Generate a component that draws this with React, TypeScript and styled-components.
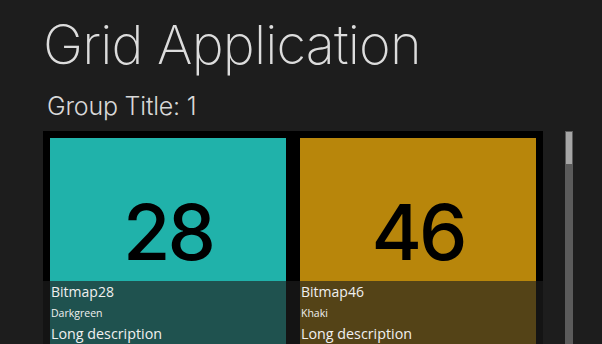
import * as React from "react"
import styled, { createGlobalStyle } from "styled-components"

interface ITile {
  id: number
  name: string
  colour: string
}

const tiles: ITile[] = [
  { id: 28, name: "Darkgreen", colour: "#20b2aa" },
  { id: 46, name: "Khaki", colour: "#b8860b" },
]

const App: React.FunctionComponent = () => {
  return (
    <Page>
      <GlobalStyle />
      <Title>Grid Application</Title>
      <GroupTitle>Group Title: 1</GroupTitle>
      <Body>
        <Grid>
          {tiles.map((t) => (
            <Tile key={t.id}>
              <Swatch colour={t.colour}>
                <Number>{t.id}</Number>
              </Swatch>
              <Caption>
                <ItemTitle>Bitmap{t.id}</ItemTitle>
                <ItemSubtitle>{t.name}</ItemSubtitle>
                <ItemDescription>Long description</ItemDescription>
              </Caption>
            </Tile>
          ))}
        </Grid>
        <ScrollTrack>
          <ScrollThumb />
        </ScrollTrack>
      </Body>
    </Page>
  )
}

const GlobalStyle = createGlobalStyle`
  html, body {
    margin: 0;
    padding: 0;
    background: #1d1d1d;
    overflow: hidden;
  }
`

const Page = styled.main`
  width: 602px;
  height: 344px;
  overflow: hidden;
  background: #1d1d1d;
  padding-left: 43px;
  box-sizing: border-box;
  font-family: "Segoe UI", "Open Sans", sans-serif;
  color: #e6e6e6;
`

const Title = styled.h1`
  margin: 0;
  padding-top: 15px;
  height: 60px;
  font-family: "Inter", "Open Sans", sans-serif;
  font-size: 54px;
  font-weight: 200;
  line-height: 60px;
  letter-spacing: -0.8px;
  color: #dcdcdc;
`

const GroupTitle = styled.h2`
  margin: 0;
  padding: 14px 0 0 4px;
  height: 36px;
  box-sizing: border-box;
  font-family: "Inter", "Open Sans", sans-serif;
  font-size: 25px;
  font-weight: 300;
  line-height: 34px;
  letter-spacing: -0.2px;
  color: #d8d8d8;
`

const Body = styled.div`
  display: flex;
  align-items: flex-start;
  margin-top: 20px;
`

const Grid = styled.div`
  display: flex;
  width: 500px;
  background: #000;
`

const Tile = styled.div`
  position: relative;
  width: 250px;
  height: 250px;
  padding: 7px;
  box-sizing: border-box;
`

const Swatch = styled.div<{ colour: string }>`
  display: flex;
  justify-content: center;
  height: 236px;
  background: ${(p) => p.colour};
`

const Number = styled.span`
  margin-top: 44px;
  font-family: "Inter", "Open Sans", sans-serif;
  font-size: 77px;
  font-weight: 500;
  line-height: 100px;
  color: #000;
  letter-spacing: -3px;
`

const Caption = styled.div`
  position: absolute;
  left: 0;
  right: 0;
  top: 150px;
  height: 100px;
  padding: 1px 8px 0;
  box-sizing: border-box;
  background: rgba(30, 30, 30, 0.65);
  color: #f0f0f0;
`

const ItemTitle = styled.div`
  font-size: 14px;
  line-height: 20px;
`

const ItemSubtitle = styled.div`
  font-size: 10.5px;
  line-height: 22px;
`

const ItemDescription = styled.div`
  font-size: 14.3px;
  line-height: 20px;
`

const ScrollTrack = styled.div`
  margin-left: 22px;
  width: 8px;
  height: 220px;
  background: #5b5b5b;
  padding: 1px;
  box-sizing: border-box;
`

const ScrollThumb = styled.div`
  height: 32px;
  background: #a6a6a6;
`

export default App
